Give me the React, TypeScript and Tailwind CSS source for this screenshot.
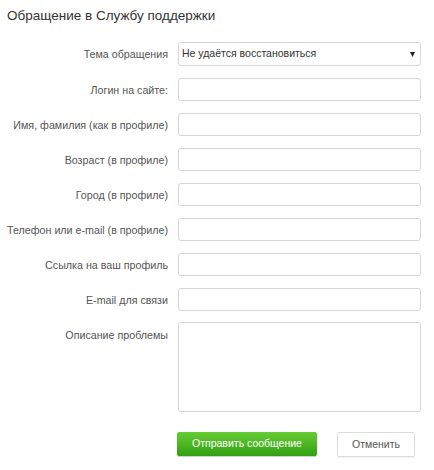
import React from 'react'

const fields = [
  'Логин на сайте:',
  'Имя, фамилия (как в профиле)',
  'Возраст (в профиле)',
  'Город (в профиле)',
  'Телефон или e-mail (в профиле)',
  'Ссылка на ваш профиль',
  'E-mail для связи',
]

function Label({ children, className = '' }: { children: React.ReactNode; className?: string }) {
  return <label className={'text-right text-[10.7px] leading-[14px] whitespace-nowrap text-[#555] ' + className}>{children}</label>
}

export default function App() {
  return (
    <div className="w-[434px] h-[470px] bg-white font-['Liberation_Sans',sans-serif]">
      <h1 className="pl-[7px] pt-[7px] text-[13.5px] leading-[18px] text-[#333]">Обращение в Службу поддержки</h1>

      <form className="mt-[17px] grid grid-cols-[168px_243px] gap-x-[10px] gap-y-[12px] items-center">
        <Label>Тема обращения</Label>
        <div className="relative h-[24px] border border-[#d6d6d6] rounded-[3px] bg-white flex items-center px-[3px] text-[10.5px] text-[#333]">
          Не удаётся восстановиться
          <svg className="absolute right-[5px] top-[9px]" width="5" height="5" viewBox="0 0 5 5">
            <path d="M0 0h5L2.5 5z" fill="#222" />
          </svg>
        </div>

        {fields.map((f) => (
          <React.Fragment key={f}>
            <Label>{f}</Label>
            <input className="h-[23px] border border-[#d6d6d6] rounded-[3px] bg-white outline-none" />
          </React.Fragment>
        ))}

        <Label className="self-start pt-[5px]">Описание проблемы</Label>
        <textarea className="mt-[-1px] h-[90px] border border-[#d6d6d6] rounded-[3px] bg-white resize-none outline-none" />
      </form>

      <div className="mt-[20px] ml-[177px] flex gap-[20px]">
        <button className="h-[24px] w-[140px] rounded-[2px] bg-gradient-to-b from-[#66cc33] to-[#30a010] text-white text-[10.5px] shadow-[0_1px_1px_rgba(0,0,0,0.2)]">
          Отправить сообщение
        </button>
        <button className="h-[25px] w-[78px] rounded-[2px] border border-[#dcdcdc] bg-white text-[#555] text-[10.5px] shadow-[0_1px_1px_rgba(0,0,0,0.06)]">
          Отменить
        </button>
      </div>
    </div>
  )
}
